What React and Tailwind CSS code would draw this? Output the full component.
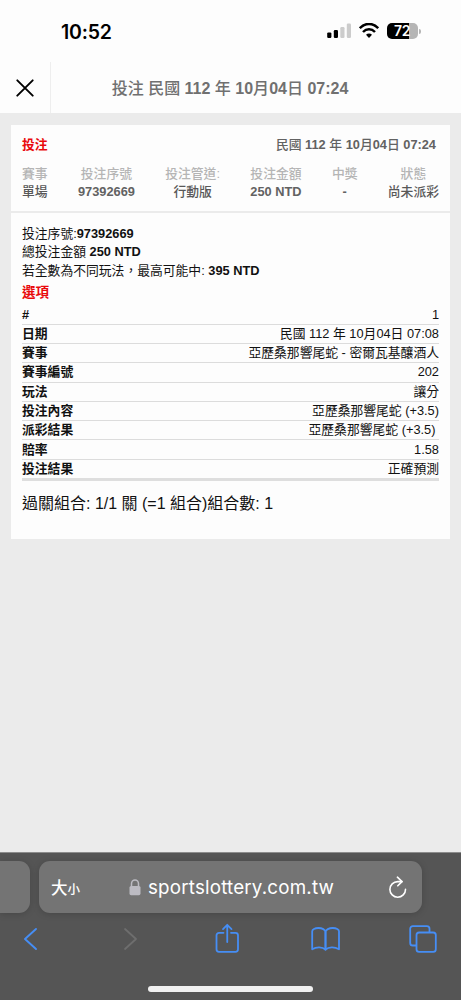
const summary = [
  ['賽事', '單場'],
  ['投注序號', '97392669'],
  ['投注管道:', '行動版'],
  ['投注金額', '250 NTD'],
  ['中獎', '-'],
  ['狀態', '尚未派彩'],
];

const rows = [
  ['#', '1'],
  ['日期', '民國 112 年 10月04日 07:08'],
  ['賽事', '亞歷桑那響尾蛇 - 密爾瓦基釀酒人'],
  ['賽事編號', '202'],
  ['玩法', '讓分'],
  ['投注內容', '亞歷桑那響尾蛇 (+3.5)'],
  ['派彩結果', '亞歷桑那響尾蛇 (+3.5)\u00a0'],
  ['賠率', '1.58'],
  ['投注結果', '正確預測'],
];

function StatusBar() {
  return (
    <div className="flex h-[62px] shrink-0 items-start justify-between pl-[61px] pr-[40px]">
      <div className="mt-[20px] font-[Inter] text-[19.5px] font-semibold leading-6 tracking-[-0.2px] text-black">10:52</div>
      <div className="mt-[23px] flex">
        <svg className="mr-[8px]" width="24" height="16" viewBox="0 0 24 16">
          <rect x="0.2" y="9.4" width="4.2" height="5.6" rx="1.2" fill="#000" />
          <rect x="6.8" y="7" width="4.2" height="8" rx="1.2" fill="#000" />
          <rect x="13.3" y="4" width="4.2" height="11" rx="1.2" fill="#ccc" />
          <rect x="19.8" y="0.6" width="4.2" height="14.4" rx="1.2" fill="#ccc" />
        </svg>
        <svg className="mr-[8px]" width="20" height="16" viewBox="0 0 20 16" fill="none" stroke="#000" strokeWidth="2.5">
          <path d="M.8 5.2C6-.5 14-.5 19.2 5.2" />
          <path d="M4 9C7.5 5.4 12.5 5.4 16 9" />
          <path d="M10 15l-3-3.2c1.7-1.6 4.3-1.6 6 0Z" fill="#000" stroke="none" />
        </svg>
        <div className="flex items-center">
          <div className="flex h-4 w-[31px] items-center justify-center rounded-[5px] bg-linear-to-r from-black from-72% to-[#b5b5b5] to-72% pr-px font-[Inter] text-[14px] font-semibold leading-4 tracking-[-0.3px] text-white">72</div>
          <div className="ml-px h-[5px] w-[2px] rounded-r-full bg-[#b5b5b5]" />
        </div>
      </div>
    </div>
  );
}

function Browser() {
  return (
    <footer className="flex h-[148px] shrink-0 flex-col border-t border-[#8c8c8c] bg-[#555] font-[Inter]">
      <div className="mt-[8px] flex h-[52px] gap-[9px]">
        <div className="w-[30px] rounded-r-[11px] bg-[#747474] shadow-[0_1px_7px_rgba(0,0,0,0.18)]" />
        <div className="flex w-[383px] items-center rounded-[11px] bg-[#747474] pl-[12px] pr-[14px] text-white shadow-[0_1px_7px_rgba(0,0,0,0.18)]">
          <div className="flex w-[78px] items-baseline pt-[2px] font-['Noto_Sans_CJK_TC',sans-serif] leading-5">
            <span className="text-[16.5px] font-medium">大</span>
            <span className="text-[12.5px] font-medium">小</span>
          </div>
          <svg className="mr-[7px]" width="12" height="17" viewBox="0 0 12 17">
            <path d="M2.5 8V4.8a3.5 3.9 0 0 1 7 0V8" fill="none" stroke="#bcbbc2" strokeWidth="1.5" />
            <rect x="0.5" y="7" width="11" height="9.2" rx="1.6" fill="#bcbbc2" />
          </svg>
          <div className="whitespace-nowrap pt-[2px] text-[18.8px] leading-6 tracking-[0.18px]">sportslottery.com.tw</div>
          <svg className="ml-auto" width="20" height="23" viewBox="0 0 20 23" fill="none" stroke="#fff" strokeWidth="1.6" strokeLinecap="round" strokeLinejoin="round">
            <path d="M14 5.6H9.7A7.8 7.8 0 1 0 17.5 13.4" />
            <path d="M9.4 1.2l4.6 4.4-4.2 4.2" />
          </svg>
        </div>
      </div>
      <div className="mt-[9px] flex h-[34px] items-center justify-between pl-[23px] pr-[24px] text-[#468ef5]">
        <svg width="15" height="24" viewBox="0 0 15 24" fill="none" stroke="currentColor" strokeWidth="1.9" strokeLinecap="round" strokeLinejoin="round">
          <path d="M13 2L2 12l11 10" />
        </svg>
        <svg className="ml-[77px]" width="15" height="24" viewBox="0 0 15 24" fill="none" stroke="#6e6e6e" strokeWidth="1.8" strokeLinecap="round" strokeLinejoin="round">
          <path d="M2 2l11 10L2 22" />
        </svg>
        <svg className="ml-[68px]" width="26" height="32" viewBox="0 0 26 32" fill="none" stroke="currentColor" strokeWidth="1.8" strokeLinecap="round" strokeLinejoin="round">
          <path d="M8.5 9.8H4A2.500 2.500 0 0 0 1.500 12.300V26.300A2.500 2.500 0 0 0 4 28.800H20.500A2.500 2.500 0 0 0 23 26.300V12.300A2.500 2.500 0 0 0 20.500 9.800H16" />
          <path d="M12.250 19V2M8 6.100L12.250 1.800l4.250 4.300" />
        </svg>
        <svg className="ml-[62px]" width="30" height="26" viewBox="0 0 30 26" fill="none" stroke="currentColor" strokeWidth="1.8" strokeLinejoin="round">
          <path d="M14.500 23.700C11.400 20.700 5.500 20.600 1.200 23.200V5.200C1.200 3.500 3.800 2 7.400 2 11 2 14.500 3.600 14.500 6Z" />
          <path d="M14.500 23.700C17.600 20.700 23.500 20.600 28 23.200V5.200C28 3.500 25.400 2 21.800 2 18.200 2 14.500 3.600 14.500 6Z" />
        </svg>
        <svg className="ml-[60px]" width="28" height="28" viewBox="0 0 28 28" fill="none" stroke="currentColor" strokeWidth="1.8" strokeLinejoin="round">
          <rect x="7.500" y="7.500" width="19.300" height="19.300" rx="2.600" />
          <path d="M7.500 20.500H3.800a2.600 2.600 0 0 1-2.600-2.600V3.800a2.600 2.600 0 0 1 2.600-2.600h14.100a2.600 2.600 0 0 1 2.600 2.600V7.500" />
        </svg>
      </div>
      <div className="mx-auto mt-[30px] h-[6px] w-[165px] rounded-full bg-[#f1f1f1]" />
    </footer>
  );
}

export default function App() {
  return (
    <div className="flex h-[1000px] w-[461px] flex-col overflow-hidden bg-[#fdfdfd] font-['Liberation_Sans','Noto_Sans_CJK_TC',sans-serif] text-[12.8px]">
      <StatusBar />
      <header className="flex h-[51px] shrink-0 items-center">
        <div className="flex h-full w-[51px] items-center justify-center border-r border-[#eee]">
          <svg width="18" height="18" viewBox="0 0 18 18" stroke="#000" strokeWidth="1.9" strokeLinecap="round">
            <path d="M1.3 1.3l15.4 15.4M16.7 1.3L1.3 16.7" />
          </svg>
        </div>
        <h1 className="flex-1 pr-[52px] pt-[2px] text-center text-[16px] font-bold leading-6 text-[#707070]">
          <span className="font-medium">投注 民國</span> 112 <span className="font-medium">年</span> 10<span className="font-medium">月</span>04<span className="font-medium">日</span> 07:24
        </h1>
      </header>
      <main className="flex-1 bg-[#ebebeb] px-[11px] pt-[12px]">
        <section className="flex h-[414px] flex-col bg-[#fdfdfd]">
          <div className="flex h-[88px] shrink-0 flex-col border-b-2 border-[#ebebeb] px-[11px] pt-[11px] font-medium">
            <div className="flex justify-between pr-[3px] leading-[18px]">
              <span className="font-bold text-[#e9090b]">投注</span>
              <span className="font-bold text-[#626262]">
                <span className="font-medium">民國</span> 112 <span className="font-medium">年</span> 10<span className="font-medium">月</span>04<span className="font-medium">日</span> 07:24
              </span>
            </div>
            <div className="mt-[11px] flex justify-between leading-[18px]">
              {summary.map(([label, value], i) => (
                <div key={label} className="whitespace-nowrap text-center">
                  <div className="text-[#b5b5b5]">{label}</div>
                  <div className={i === 1 || i === 3 || i === 4 ? 'font-bold text-[#626262]' : 'font-medium text-[#585858]'}>{value}</div>
                </div>
              ))}
            </div>
          </div>
          <div className="px-[11px] pt-[12px] leading-[18.3px] text-[#111]">
            <p>投注序號:<b>97392669</b></p>
            <p>總投注金額 <b>250 NTD</b></p>
            <p>若全數為不同玩法，最高可能中: <b>395 NTD</b></p>
            <h2 className="mt-[2px] h-[23.5px] text-[13.5px] font-bold leading-[22px] text-[#e9090b]">選項</h2>
          </div>
          <div className="mx-[11px] border-b-[3px] border-[#dedede] text-[#111]">
            {rows.map(([label, value], i) => (
              <div
                key={i}
                className="flex h-[19.3px] items-center justify-between border-b border-[#dcdcdc] leading-[18px] last:h-[18.5px] last:border-b-0"
              >
                <span className="font-bold">{label}</span>
                <span>{value}</span>
              </div>
            ))}
          </div>
          <p className="px-[11px] pt-[11px] text-[16px] leading-6 text-[#111]">過關組合: 1/1 關 (=1 組合)組合數: 1</p>
        </section>
      </main>
      <Browser />
    </div>
  );
}
